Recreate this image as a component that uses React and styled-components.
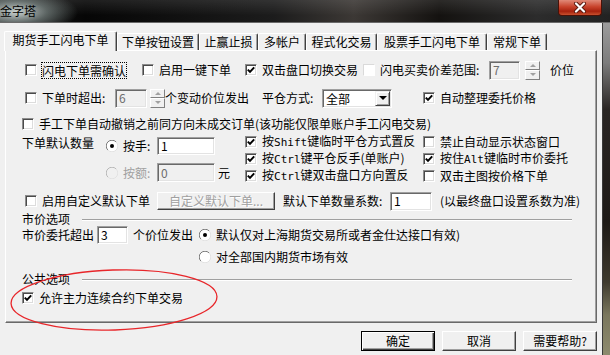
import React from 'react';
import styled, { createGlobalStyle } from 'styled-components';

const GlobalStyle = createGlobalStyle`
  html, body {
    margin: 0;
    padding: 0;
    background: #f0f0f0;
  }
  body {
    font-family: "Noto Sans CJK SC", "Liberation Sans", sans-serif;
    font-size: 12px;
    color: #000;
  }
`;

const Window = styled.div`
  position: relative;
  width: 610px;
  height: 355px;
  display: flex;
  flex-direction: column;
  overflow: hidden;
  background: #f0f0f0;
`;

const TitleBar = styled.div`
  box-sizing: border-box;
  flex: none;
  height: 23px;
  display: flex;
  align-items: flex-start;
  justify-content: space-between;
  border-bottom: 1px solid #6a6a6a;
  background:
    radial-gradient(ellipse 62px 22px at 16px 12px, rgba(210, 220, 218, 0.95) 0%, rgba(150, 165, 162, 0.55) 50%, rgba(0, 0, 0, 0) 100%),
    linear-gradient(180deg, rgba(255, 255, 255, 0.1), rgba(0, 0, 0, 0) 70%),
    linear-gradient(90deg, #1a1a1a 0%, #060606 14%, #1c1c1c 45%, #3c3835 58%, #141210 72%, #2c2c2c 88%, #222 100%);
`;

const Title = styled.span`
  padding-top: 3px;
  font-size: 12px;
  line-height: 16px;
  color: #000;
`;

const CloseBtn = styled.div`
  box-sizing: border-box;
  width: 44px;
  height: 16px;
  margin-right: 8px;
  display: flex;
  align-items: center;
  justify-content: center;
  border: 1px solid #4a1208;
  border-top: none;
  border-radius: 0 0 4px 4px;
  background: linear-gradient(180deg, #e08a78 0%, #c8432c 45%, #a8220e 75%, #c8502e 100%);
`;

const Body = styled.div`
  flex: 1;
  display: flex;
`;

const Client = styled.div`
  width: 602px;
  flex: none;
  display: flex;
  flex-direction: column;
`;

const Frame = styled.div`
  flex: 1;
  border-left: 1px solid #3a3a3a;
  background: linear-gradient(180deg, #9c9c9c 0%, #7c7c7c 12%, #2a2624 26%, #1e1a17 60%, #3e3a2e 78%, #7a775d 88%, #8e8b6e 100%);
`;

const TabStrip = styled.div`
  position: relative;
  z-index: 2;
  height: 19px;
  margin-top: 8px;
  padding-left: 4px;
  display: flex;
  align-items: flex-end;
`;

const Tab = styled.div`
  box-sizing: border-box;
  flex: none;
  width: ${p => p.$w}px;
  height: ${p => (p.$active ? 20 : 17)}px;
  margin-bottom: ${p => (p.$active ? -1 : 0)}px;
  padding-bottom: ${p => (p.$active ? 3 : 0)}px;
  display: flex;
  align-items: center;
  justify-content: center;
  background: #f0f0f0;
  border-top: 1px solid #fff;
  border-left: 1px solid #fff;
  border-right: 1px solid #404040;
  box-shadow: inset -1px 0 0 #a0a0a0;
  border-radius: 2px 2px 0 0;
  white-space: nowrap;
  line-height: 16px;
`;

const Panel = styled.div`
  box-sizing: border-box;
  width: 592px;
  height: 273px;
  margin-left: 5px;
  padding: 9px 0 0 16px;
  display: flex;
  flex-direction: column;
  border: 1px solid;
  border-color: #fff #696969 #696969 #fff;
  box-shadow: inset -1px -1px 0 #a0a0a0;
`;

const Row = styled.div`
  flex: none;
  display: flex;
  align-items: center;
  height: ${p => p.$h}px;
  margin-top: ${p => p.$mt || 0}px;
  padding-left: ${p => p.$indent || 0}px;
`;

const Cell = styled.div`
  flex: none;
  display: flex;
  align-items: center;
  width: ${p => (p.$w ? `${p.$w}px` : 'auto')};
  height: ${p => (p.$h ? `${p.$h}px` : 'auto')};
  margin-left: ${p => p.$ml || 0}px;
  margin-top: ${p => p.$mt || 0}px;
  white-space: nowrap;
`;

const Text = styled.span`
  flex: none;
  display: inline-block;
  width: ${p => (p.$w ? `${p.$w}px` : 'auto')};
  margin-left: ${p => p.$ml || 0}px;
  line-height: ${p => p.$lh || 16}px;
  white-space: nowrap;
  color: ${p => (p.$disabled ? '#a0a0a0' : '#000')};
`;

const Focus = styled.span`
  line-height: 15px;
  white-space: nowrap;
  outline: 1px dotted #000;
  outline-offset: 0;
`;

const Mono = styled.span`
  font-family: "DejaVu Sans Mono", "Liberation Mono", monospace;
  font-size: 11px;
`;

const Box = styled.span`
  box-sizing: border-box;
  flex: none;
  width: 12px;
  height: 12px;
  margin-right: 5px;
  display: flex;
  align-items: center;
  justify-content: center;
  background: #fff;
  border: 1px solid;
  border-color: ${p => (p.$faint ? '#dadada #fff #fff #dadada' : '#8c8c8c #fff #fff #8c8c8c')};
  box-shadow: ${p => (p.$faint ? 'none' : 'inset 1px 1px 0 #4a4a4a, inset -1px -1px 0 #dcdcdc')};
`;

const Field = styled.div`
  box-sizing: border-box;
  flex: none;
  width: ${p => p.$w}px;
  height: ${p => p.$h}px;
  padding-left: 3px;
  display: flex;
  align-items: center;
  background: ${p => (p.$disabled ? '#f0f0f0' : '#fff')};
  color: ${p => (p.$disabled ? '#6d6d6d' : '#000')};
  border: 1px solid;
  border-color: #a0a0a0 #fff #fff #a0a0a0;
  box-shadow: inset 1px 1px 0 #696969, inset -1px -1px 0 #e3e3e3;
  line-height: 14px;
`;

const Spinner = styled.div`
  flex: none;
  width: 15px;
  height: 19px;
  margin-left: ${p => p.$ml || 0}px;
  display: flex;
  flex-direction: column;
`;

const SpinBtn = styled.div`
  box-sizing: border-box;
  flex: 1;
  display: flex;
  align-items: center;
  justify-content: center;
  background: #f0f0f0;
  border: 1px solid;
  border-color: #fff #808080 #808080 #fff;
  &::after {
    content: '';
    width: 0;
    height: 0;
    border-left: 3px solid transparent;
    border-right: 3px solid transparent;
    ${p => (p.$down ? 'border-top: 3px solid #a0a0a0;' : 'border-bottom: 3px solid #a0a0a0;')}
  }
`;

const Select = styled.div`
  box-sizing: border-box;
  flex: none;
  width: ${p => p.$w}px;
  height: 19px;
  display: flex;
  align-items: stretch;
  background: #fff;
  border: 1px solid;
  border-color: #a0a0a0 #fff #fff #a0a0a0;
  box-shadow: inset 1px 1px 0 #696969, inset -1px -1px 0 #e3e3e3;
  padding: 1px;
`;

const SelectValue = styled.span`
  flex: 1;
  padding-left: 2px;
  line-height: 15px;
`;

const DropBtn = styled.span`
  box-sizing: border-box;
  width: 15px;
  display: flex;
  align-items: center;
  justify-content: center;
  background: #f0f0f0;
  border: 1px solid;
  border-color: #f0f0f0 #404040 #404040 #f0f0f0;
  box-shadow: inset 1px 1px 0 #fff, inset -1px -1px 0 #a0a0a0;
  &::after {
    content: '';
    width: 0;
    height: 0;
    border-left: 4px solid transparent;
    border-right: 4px solid transparent;
    border-top: 4px solid #000;
  }
`;

const Button = styled.div`
  box-sizing: border-box;
  flex: none;
  width: ${p => p.$w}px;
  height: ${p => p.$h || 20}px;
  margin-left: ${p => p.$ml || 0}px;
  display: flex;
  align-items: center;
  justify-content: center;
  background: #f0f0f0;
  white-space: nowrap;
  line-height: 16px;
  border: 1px solid;
  border-color: ${p => (p.$default ? '#000' : '#fff #404040 #404040 #fff')};
  box-shadow: ${p =>
    p.$default
      ? 'inset 1px 1px 0 #fff, inset -1px -1px 0 #404040, inset -2px -2px 0 #a0a0a0'
      : 'inset -1px -1px 0 #a0a0a0'};
  color: ${p => (p.$disabled ? '#a0a0a0' : '#000')};
  text-shadow: ${p => (p.$disabled ? '1px 1px 0 #fff' : 'none')};
`;

const Group = styled.div`
  flex: none;
  display: flex;
  align-items: center;
  height: 14px;
  margin-top: ${p => p.$mt || 0}px;
  padding-right: 24px;
`;

const GroupLine = styled.div`
  flex: 1;
  margin-left: 12px;
  margin-top: 1px;
  border-top: 1px solid #a0a0a0;
  border-bottom: 1px solid #fff;
`;

const Block = styled.div`
  flex: none;
  display: flex;
  height: 52px;
  margin-top: 1px;
`;

const Column = styled.div`
  flex: none;
  display: flex;
  flex-direction: column;
  width: ${p => p.$w}px;
  padding-top: ${p => p.$pt || 0}px;
`;

const ButtonRow = styled.div`
  display: flex;
  justify-content: flex-end;
  gap: 7px;
  margin-top: 8px;
  padding-right: 5px;
`;

const Annotation = styled.svg`
  position: absolute;
  left: 8px;
  top: 268px;
  pointer-events: none;
`;

const Tick = () => (
  <svg width="8" height="8" viewBox="0 0 8 8">
    <polyline points="0.8,3.6 3,5.9 7.2,1.4" fill="none" stroke="#000" strokeWidth="2" />
  </svg>
);

const Check = ({ checked, faint, focus, w, ml, h, children }) => (
  <Cell $w={w} $ml={ml} $h={h}>
    <Box $faint={faint}>{checked && <Tick />}</Box>
    {focus ? <Focus>{children}</Focus> : <Text>{children}</Text>}
  </Cell>
);

const RadioMark = ({ checked, disabled }) => (
  <svg width="12" height="12" viewBox="0 0 12 12" style={{ flex: 'none', marginRight: 5 }}>
    <circle cx="6" cy="6" r="5.5" fill={disabled ? '#f0f0f0' : '#fff'} />
    <path d="M1.9 10.1 A5.5 5.5 0 0 1 10.1 1.9" fill="none" stroke={disabled ? '#b8b8b8' : '#7a7a7a'} />
    <path d="M10.1 1.9 A5.5 5.5 0 0 1 1.9 10.1" fill="none" stroke="#e2e2e2" />
    {checked && <circle cx="6" cy="6" r="2" fill="#000" />}
  </svg>
);

const Spin = ({ ml }) => (
  <Spinner $ml={ml}>
    <SpinBtn />
    <SpinBtn $down />
  </Spinner>
);

const tabs = [
  { label: '期货手工闪电下单', w: 113, active: true },
  { label: '下单按钮设置', w: 82 },
  { label: '止赢止损', w: 59 },
  { label: '多帐户', w: 48 },
  { label: '程式化交易', w: 71 },
  { label: '股票手工闪电下单', w: 110 },
  { label: '常规下单', w: 60 },
];

export default function App() {
  return (
    <Window>
      <GlobalStyle />
      <TitleBar>
        <Title>金字塔</Title>
        <CloseBtn>
          <svg width="14" height="11" viewBox="0 0 14 11">
            <path d="M3 1.5 L11 9.5 M11 1.5 L3 9.5" stroke="#5a1a10" strokeWidth="4" strokeLinecap="round" />
            <path d="M3 1.5 L11 9.5 M11 1.5 L3 9.5" stroke="#fff" strokeWidth="2.2" strokeLinecap="round" />
          </svg>
        </CloseBtn>
      </TitleBar>

      <Body>
        <Client>
          <TabStrip>
            {tabs.map(t => (
              <Tab key={t.label} $w={t.w} $active={t.active}>
                {t.label}
              </Tab>
            ))}
          </TabStrip>

          <Panel>
            <Row $h={20} $indent={3}>
              <Check w={117} focus>闪电下单需确认</Check>
              <Check w={103}>启用一键下单</Check>
              <Check w={118} checked>双击盘口切换交易</Check>
              <Check w={126} faint>闪电买卖价差范围:</Check>
              <Field $w={31} $h={19} $disabled>7</Field>
              <Spin ml={5} />
              <Text $ml={10}>价位</Text>
            </Row>

            <Row $h={20} $mt={8} $indent={3}>
              <Check w={90}>下单时超出:</Check>
              <Field $w={32} $h={19} $disabled>6</Field>
              <Spin ml={3} />
              <Text $w={97}>个变动价位发出</Text>
              <Text $w={60}>平仓方式:</Text>
              <Select $w={70}>
                <SelectValue>全部</SelectValue>
                <DropBtn />
              </Select>
              <Check ml={31} checked>自动整理委托价格</Check>
            </Row>

            <Row $h={16} $mt={8}>
              <Check>手工下单自动撤销之前同方向未成交订单(该功能仅限单账户手工闪电交易)</Check>
            </Row>

            <Block>
              <Column $w={84} $pt={2}>
                <Text>下单默认数量</Text>
              </Column>
              <Column $w={139} $pt={4}>
                <Cell $h={18}>
                  <RadioMark checked />
                  <Text $w={34}>按手:</Text>
                  <Field $w={58} $h={18}>1</Field>
                </Cell>
                <Cell $h={19} $mt={8}>
                  <RadioMark disabled />
                  <Text $w={34} $disabled>按额:</Text>
                  <Field $w={58} $h={19} $disabled>0</Field>
                  <Text $ml={3}>元</Text>
                </Cell>
              </Column>
              <Column $w={178}>
                <Check h={17} checked>按<Mono>Shift</Mono>键临时平仓方式置反</Check>
                <Check h={17} checked>按<Mono>Ctrl</Mono>键平仓反手(单账户)</Check>
                <Check h={18} checked>按<Mono>Ctrl</Mono>键双击盘口方向置反</Check>
              </Column>
              <Column $w={160}>
                <Check h={17}>禁止自动显示状态窗口</Check>
                <Check h={17} checked>按住<Mono>Alt</Mono>键临时市价委托</Check>
                <Check h={18}>双击主图按价格下单</Check>
              </Column>
            </Block>

            <Row $h={20} $mt={6} $indent={3}>
              <Check w={132}>启用自定义默认下单</Check>
              <Button $w={118} $h={18} $disabled>自定义默认下单...</Button>
              <Text $w={107} $ml={8}>默认下单数量系数:</Text>
              <Field $w={42} $h={19}>1</Field>
              <Text $ml={8}>(以最终盘口设置系数为准)</Text>
            </Row>

            <Group $mt={1}>
              <Text $lh={14}>市价选项</Text>
              <GroupLine />
            </Group>

            <Row $h={18} $mt={0}>
              <Text $w={75} $lh={14}>市价委托超出</Text>
              <Field $w={31} $h={18}>3</Field>
              <Text $w={66} $ml={5} $lh={14}>个价位发出</Text>
              <Cell>
                <RadioMark checked />
                <Text $lh={14}>默认仅对上海期货交易所或者金仕达接口有效)</Text>
              </Cell>
            </Row>

            <Row $h={16} $mt={5} $indent={177}>
              <RadioMark />
              <Text>对全部国内期货市场有效</Text>
            </Row>

            <Group $mt={7}>
              <Text $lh={14}>公共选项</Text>
              <GroupLine />
            </Group>

            <Row $h={16} $mt={4}>
              <Check checked>允许主力连续合约下单交易</Check>
            </Row>
          </Panel>

          <ButtonRow>
            <Button $w={74} $default>确定</Button>
            <Button $w={74}>取消</Button>
            <Button $w={74}>需要帮助?</Button>
          </ButtonRow>
        </Client>
        <Frame />
      </Body>

      <Annotation width="214" height="66" viewBox="0 0 214 66">
        <ellipse cx="106" cy="32" rx="103" ry="30" fill="none" stroke="#e8262a" strokeWidth="1.3" transform="rotate(-2 106 32)" />
      </Annotation>
    </Window>
  );
}
